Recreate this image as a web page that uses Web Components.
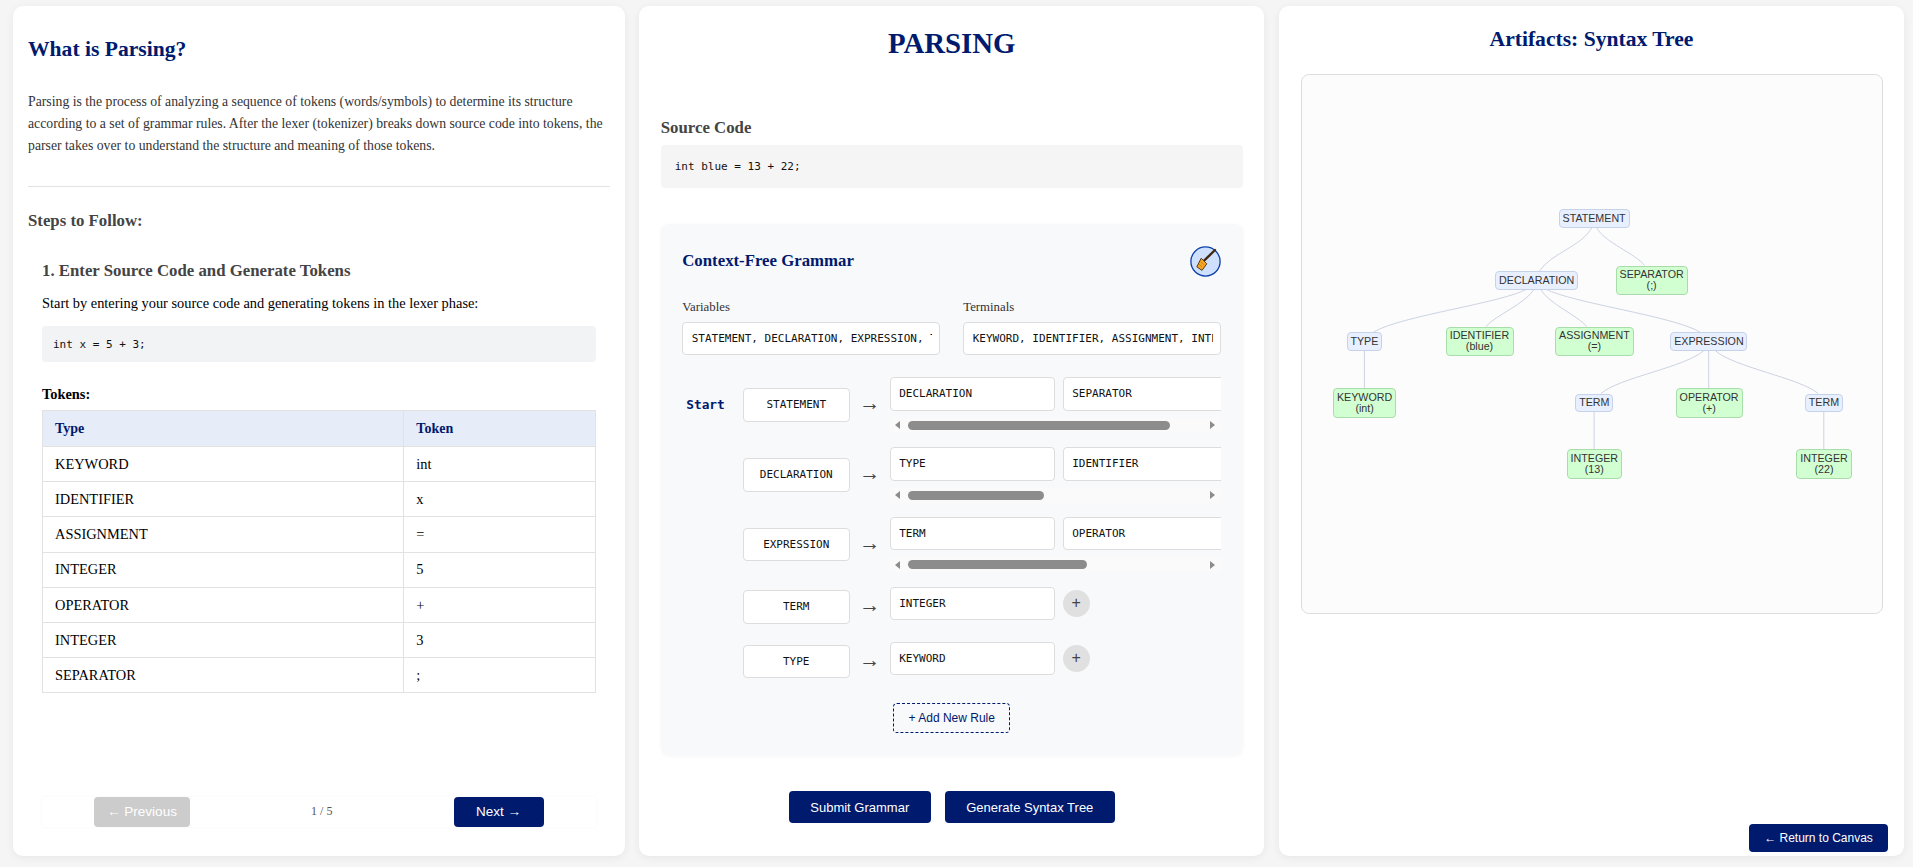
<!DOCTYPE html>
<html lang="en">
<head>
<meta charset="utf-8">
<title>Parsing</title>
<style>
html,body{margin:0;padding:0;background:#f5f5f5;height:867px;overflow:hidden;font-family:"Liberation Serif",serif}
</style>
</head>
<body>
<parsing-app></parsing-app>
<script>
const SERIF='"Liberation Serif",serif', SANS='"Liberation Sans",Arial,sans-serif', MONO='"DejaVu Sans Mono",monospace';
function def(name, css, html, init){
  customElements.define(name, class extends HTMLElement{
    constructor(){super();const r=this.attachShadow({mode:'open'});
      r.innerHTML='<style>'+css+'</style>'+(typeof html==='function'?html(this):html);}
    connectedCallback(){ if(init&&!this._i){this._i=1;init(this);} }
  });
}
def('panel-card',`:host{display:flex;flex-direction:column;box-sizing:border-box;height:850px;background:#fff;border-radius:10px;box-shadow:0 2px 8px rgba(0,0,0,.06);flex:none}`,`<slot></slot>`);
def('code-block',`:host{display:flex;align-items:center;box-sizing:border-box;border-radius:4px;font:11px/1 ${MONO};color:#111;white-space:pre}`,`<slot></slot>`);
def('ui-button',`:host{display:inline-flex;align-items:center;justify-content:center;box-sizing:border-box;border-radius:4px;background:#001a6e;color:#fff;font:13px/1 ${SANS};white-space:nowrap}
:host([disabled]){background:#ccc}`,`<slot></slot>`);
def('field-box',`:host{display:block;box-sizing:border-box;height:33.4px;flex:none;background:#fff;border:1px solid #ddd;border-radius:4px;padding:0 7px 0 8.5px;font:11px/31px ${MONO};color:#111}
div{overflow:hidden;white-space:nowrap}
:host([center]){text-align:center;padding:0 9px}`,`<div><slot></slot></div>`);
def('plus-button',`:host{display:flex;align-items:center;justify-content:center;flex:none;width:27px;height:27px;border-radius:50%;background:#e0e0e0;color:#444;font:16px/1 ${SANS}}`,`+`);
def('broom-button',`:host{display:block;width:31px;height:31px;flex:none}svg{display:block}`,`<svg width="31" height="31" viewBox="0 0 31 31">
<circle cx="15.5" cy="15.5" r="14.6" fill="#cfe0ff" stroke="#0b3fa8" stroke-width="1.3"/>
<path d="M25 4 14.6 14.2" stroke="#3f2a14" stroke-width="2.4" stroke-linecap="round"/>
<path d="M11.2 12.2 16.8 17.8 12 24.4 6.8 20.8Z" fill="#f5a623" stroke="#5a3a10" stroke-width="1" stroke-linejoin="round"/>
<path d="M10.6 15.5 13.8 18.8M9 18 12 21" stroke="#c97a10" stroke-width=".9"/>
</svg>`);
def('h-scrollbar',`:host{display:flex;align-items:center;height:15px;background:#fafafa;flex:none}
.a{width:18px;height:15px;flex:none;display:flex;align-items:center}
.a i{display:block;width:0;height:0;border-top:4.5px solid transparent;border-bottom:4.5px solid transparent}
.l{padding-left:5px;box-sizing:border-box}.l i{border-right:5px solid #8c8c8c}
.r{padding-left:7px;box-sizing:border-box}.r i{border-left:5px solid #8c8c8c}
.t{flex:1}.t b{display:block;height:9px;border-radius:5px;background:#8c8c8c}`,
h=>`<div class="a l"><i></i></div><div class="t"><b style="width:${h.getAttribute('thumb')}px"></b></div><div class="a r"><i></i></div>`);
def('token-table',`:host{display:block}
table{width:100%;border-collapse:collapse;table-layout:fixed;font:14.4px/1 ${SERIF};color:#000}
th,td{border:1px solid #e2e2e2;text-align:left;padding:0 12px}
th{height:35px;background:#e6ecf8;color:#001a6e;font-weight:700;font-size:14px}
td{height:34.2px}
col.a{width:65.4%}`,`<table><colgroup><col class="a"><col></colgroup>
<thead><tr><th>Type</th><th>Token</th></tr></thead><tbody>
<tr><td>KEYWORD</td><td>int</td></tr><tr><td>IDENTIFIER</td><td>x</td></tr><tr><td>ASSIGNMENT</td><td>=</td></tr>
<tr><td>INTEGER</td><td>5</td></tr><tr><td>OPERATOR</td><td>+</td></tr><tr><td>INTEGER</td><td>3</td></tr><tr><td>SEPARATOR</td><td>;</td></tr>
</tbody></table>`);
def('step-nav',`:host{display:flex;align-items:center;justify-content:space-between;height:30px;padding:0 52px;background:#fff;box-shadow:0 0 3px rgba(0,0,0,.04);margin-top:auto;margin-bottom:29px}
span{font:12px/1 ${SERIF};color:#555;margin-top:-2px}
ui-button{font-size:13.5px;height:30px}`,
`<ui-button disabled style="width:96px">← Previous</ui-button><span>1 / 5</span><ui-button style="width:90px">Next →</ui-button>`);
def('info-panel',`:host{display:flex;flex-direction:column;height:100%;padding:0 15px;font-family:${SERIF}}
h2{margin:30px 0 0;font:700 21.6px/26px ${SERIF};color:#001a6e}
p.intro{margin:29px 0 0;font:13.76px/22px ${SERIF};color:#333}
hr{border:0;border-top:1px solid #e3e3e3;margin:29px 0 0}
h3{margin:24px 0 0;font:700 16.8px/20px ${SERIF};color:#444}
.step{display:flex;flex-direction:column;flex:1;padding:0 14px}
h4{margin:30px 0 0;font:700 16.8px/20px ${SERIF};color:#444}
p.lead{margin:12px 0 0;font:14.4px/20px ${SERIF};color:#000}
code-block{margin-top:13px;height:36px;padding:0 11px;background:#f1f3f5}
.tk{margin:22px 0 6px;font:700 14.4px/20px ${SERIF};color:#000}`,
`<h2>What is Parsing?</h2>
<p class="intro">Parsing is the process of analyzing a sequence of tokens (words/symbols) to determine its structure according to a set of grammar rules. After the lexer (tokenizer) breaks down source code into tokens, the parser takes over to understand the structure and meaning of those tokens.</p>
<hr>
<h3>Steps to Follow:</h3>
<div class="step">
<h4>1. Enter Source Code and Generate Tokens</h4>
<p class="lead">Start by entering your source code and generating tokens in the lexer phase:</p>
<code-block>int x = 5 + 3;</code-block>
<div class="tk">Tokens:</div>
<token-table></token-table>
<step-nav></step-nav>
</div>`);
def('grammar-rule',`:host{display:flex;align-items:center}
.start{width:60.5px;box-sizing:border-box;padding-left:4px;flex:none;font:700 12.8px/1 ${MONO};color:#001a6e}
.arrow{width:40px;flex:none;text-align:center;font:21px/1 ${SERIF};color:#444;margin-top:-3px}
.rhs{width:331px;flex:none;display:flex;flex-direction:column}
.items{display:flex;gap:8px;overflow:hidden;padding-bottom:7px;align-items:center}`,
h=>{const items=(h.getAttribute('rhs')||'').split(' '),th=h.getAttribute('thumb');
 return `<div class="start">${h.hasAttribute('start')?'Start':''}</div><field-box center style="width:107px">${h.getAttribute('lhs')}</field-box><div class="arrow">→</div><div class="rhs"><div class="items">${items.map(i=>`<field-box style="width:165px">${i}</field-box>`).join('')}<plus-button></plus-button></div>${th?`<h-scrollbar thumb="${th}"></h-scrollbar>`:''}</div>`});
def('grammar-card',`:host{display:block;box-sizing:border-box;height:531px;padding:22px 21.5px;background:#f8f9fa;border-radius:8px;box-shadow:0 1px 4px rgba(0,0,0,.04);margin:36px 0 0 0}
.head{display:flex;justify-content:space-between;align-items:center}
h3{margin:-2px 0 0;font:700 16.8px/20px ${SERIF};color:#001a6e}
.vt{display:grid;grid-template-columns:258px 258px;gap:8px 23px;margin-top:23px}
label{font:12.8px/14px ${SERIF};color:#333;display:block;height:14px;margin-bottom:8px}
.rules{display:flex;flex-direction:column;gap:14.4px;margin-top:22px}
.add{display:flex;justify-content:center;margin-top:21px}
.add span{display:flex;align-items:center;justify-content:center;box-sizing:border-box;width:117px;height:30px;border:1px dashed #001a6e;border-radius:4px;font:12px/1 ${SANS};color:#001a6e}`,
`<div class="head"><h3>Context-Free Grammar</h3><broom-button></broom-button></div>
<div class="vt"><div><label>Variables</label><field-box>STATEMENT, DECLARATION, EXPRESSION, TERM, TYPE</field-box></div>
<div><label>Terminals</label><field-box>KEYWORD, IDENTIFIER, ASSIGNMENT, INTEGER, OPERATOR, SEPARATOR</field-box></div></div>
<div class="rules">
<grammar-rule start lhs="STATEMENT" rhs="DECLARATION SEPARATOR" thumb="262"></grammar-rule>
<grammar-rule lhs="DECLARATION" rhs="TYPE IDENTIFIER ASSIGNMENT EXPRESSION" thumb="136"></grammar-rule>
<grammar-rule lhs="EXPRESSION" rhs="TERM OPERATOR TERM" thumb="179"></grammar-rule>
<grammar-rule lhs="TERM" rhs="INTEGER"></grammar-rule>
<grammar-rule lhs="TYPE" rhs="KEYWORD"></grammar-rule>
</div>
<div class="add"><span>+ Add New Rule</span></div>`);
def('parse-panel',`:host{display:flex;flex-direction:column;height:100%;padding:0 21.5px}
h1{margin:20px 0 0;text-align:center;font:700 28.8px/34px ${SERIF};color:#001a6e}
h3{margin:58px 0 0;font:700 16.8px/20px ${SERIF};color:#444}
code-block{margin-top:7px;height:43px;padding:0 14px;background:#f5f5f5}
.btns{display:flex;justify-content:center;gap:14px;margin-top:36px}`,
`<h1>PARSING</h1><h3>Source Code</h3><code-block>int blue = 13 + 22;</code-block>
<grammar-card></grammar-card>
<div class="btns"><ui-button style="width:142px;height:32px">Submit Grammar</ui-button><ui-button style="width:170px;height:32px">Generate Syntax Tree</ui-button></div>`);
def('tree-node',`:host{position:absolute;display:flex;flex-direction:column;align-items:center;justify-content:center;box-sizing:border-box;border:1px solid #c6d2ea;background:#e8efff;border-radius:4px;font:10.7px/11px ${SANS};color:#333;white-space:nowrap;text-align:center}
:host([leaf]){background:#d2ffd2;border-color:#a8dca8}`,`<slot></slot>`,
h=>{const [x,y,w,ht]=h.getAttribute('box').split(' ').map(Number);
 h.style.left=(x-1302)+'px';h.style.top=(y-75)+'px';h.style.width=w+'px';h.style.height=ht+'px';});
const N=[
['STATEMENT','',1558.6,209,71],['DECLARATION','',1495.2,271,83],['SEPARATOR','(;)',1615.5,265.5,72.3],
['TYPE','',1346.6,332,35.5],['IDENTIFIER','(blue)',1445.5,326.5,68],['ASSIGNMENT','(=)',1555,326.5,78.7],['EXPRESSION','',1670.4,332,77],
['KEYWORD','(int)',1332.9,388,63.4],['TERM','',1575.1,393.5,38.4],['OPERATOR','(+)',1675.6,388,67],['TERM','',1804.8,393.5,38.4],
['INTEGER','(13)',1566.6,449,55.4],['INTEGER','(22)',1796.3,449,55.4]];
const E=["M1591.7 228C1582 246 1550 254 1539.6 271","M1596.9 228C1604 242 1636 254 1644.6 265.5",
"M1527 289C1502 303 1400 316 1373.7 332","M1534.3 289C1525 304 1496 315 1485.9 326.5","M1540.4 289C1549 304 1577 315 1586.8 326.5","M1545.6 289C1572 303 1673 316 1699.9 332",
"M1364.4 350.5V388","M1703.9 350.5C1686 367 1618 378 1601 393.5","M1708.7 350.5V388","M1715.2 350.5C1733 367 1800 378 1818.2 393.5","M1594.1 412V449","M1823.8 412V449"];
def('syntax-tree',`:host{display:block;position:relative;box-sizing:border-box;width:582px;height:540px;margin:0 0 0 22px;border:1px solid #ddd;border-radius:8px;background:#fcfcfc;flex:none;overflow:hidden}
svg{position:absolute;left:0;top:0}`,
`<svg width="580" height="538" viewBox="1302 75 580 538" fill="none" stroke="#ccd3e2" stroke-width="1">${E.map(d=>`<path d="${d}"/>`).join('')}</svg>`+
N.map(n=>`<tree-node ${n[1]?'leaf':''} box="${n[2]} ${n[3]} ${n[4]} ${n[1]?29.5:18.7}">${n[0]}${n[1]?`<span>${n[1]}</span>`:''}</tree-node>`).join(''));
def('tree-panel',`:host{display:flex;flex-direction:column;height:100%}
h2{margin:22px 0 0;text-align:center;font:700 21.6px/22px ${SERIF};color:#001a6e}
syntax-tree{margin-top:24px}
ui-button{align-self:flex-end;margin:auto 16px 4px 0;width:139px;height:28px;font-size:12px}`,
`<h2>Artifacts: Syntax Tree</h2><syntax-tree></syntax-tree><ui-button>← Return to Canvas</ui-button>`);
def('parsing-app',`:host{display:flex;gap:14.75px;box-sizing:border-box;width:1913px;height:867px;padding:6px 0 0 13px}`,
`<panel-card style="width:611.5px"><info-panel></info-panel></panel-card>
<panel-card style="width:625px"><parse-panel></parse-panel></panel-card>
<panel-card style="width:625px"><tree-panel></tree-panel></panel-card>`);
</script>
</body>
</html>
